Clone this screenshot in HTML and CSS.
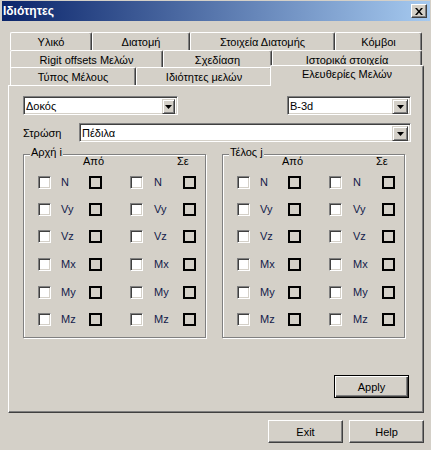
FILE: index.html
```html
<!DOCTYPE html>
<html>
<head>
<meta charset="utf-8">
<link rel="stylesheet" href="styles.css">
</head>
<body>
<div class="window">
  <div class="titlebar">
    <span class="title">Ιδιότητες</span>
    <span class="close"><svg width="8" height="7" viewBox="0 0 8 7"><path d="M0 0h2l2 2.4L6 0h2L5 3.5 8 7H6L4 4.6 2 7H0l3-3.5z" fill="#000"/></svg></span>
  </div>
  <div class="main">
    <div class="tabs">
      <div class="tabrow r1">
        <div class="tab t-yliko">Υλικό</div>
        <div class="tab t-diatomi">Διατομή</div>
        <div class="tab t-stoixeia">Στοιχεία Διατομής</div>
        <div class="tab t-komvoi">Κόμβοι</div>
      </div>
      <div class="tabrow r2">
        <div class="tab t-rigit">Rigit offsets Μελών</div>
        <div class="tab t-sxed">Σχεδίαση</div>
        <div class="tab t-istor">Ιστορικά στοιχεία</div>
      </div>
      <div class="tabrow r3">
        <div class="tab t-typos">Τύπος Μέλους</div>
        <div class="tab t-idiot">Ιδιότητες μελών</div>
        <div class="tab tab-active">Ελευθερίες Μελών</div>
      </div>
    </div>
    <div class="panel">
      <div class="combo-row">
        <div class="combo c-dokos"><span class="combo-text">Δοκός</span><span class="combo-btn narrow"><svg width="7" height="4" viewBox="0 0 7 4"><path d="M0 0h7L3.5 4z" fill="#000"/></svg></span></div>
        <div class="combo c-b3d"><span class="combo-text">B-3d</span><span class="combo-btn"><svg width="7" height="4" viewBox="0 0 7 4"><path d="M0 0h7L3.5 4z" fill="#000"/></svg></span></div>
      </div>
      <div class="strosi-row">
        <span class="strosi-label">Στρώση</span>
        <div class="combo c-pedila"><span class="combo-text">Πέδιλα</span><span class="combo-btn"><svg width="7" height="4" viewBox="0 0 7 4"><path d="M0 0h7L3.5 4z" fill="#000"/></svg></span></div>
      </div>
      <div class="groups">
        <div class="group">
          <span class="group-label">Αρχή i</span>
          <div class="group-head"><span class="h-apo">Από</span><span>Σε</span></div>
          <div class="rows">
            <div class="row"><span class="pair p1"><span class="cb"></span><span class="lbl">N</span><span class="bx"></span></span><span class="pair p2"><span class="cb"></span><span class="lbl">N</span><span class="bx"></span></span></div>
            <div class="row"><span class="pair p1"><span class="cb"></span><span class="lbl">Vy</span><span class="bx"></span></span><span class="pair p2"><span class="cb"></span><span class="lbl">Vy</span><span class="bx"></span></span></div>
            <div class="row"><span class="pair p1"><span class="cb"></span><span class="lbl">Vz</span><span class="bx"></span></span><span class="pair p2"><span class="cb"></span><span class="lbl">Vz</span><span class="bx"></span></span></div>
            <div class="row"><span class="pair p1"><span class="cb"></span><span class="lbl">Mx</span><span class="bx"></span></span><span class="pair p2"><span class="cb"></span><span class="lbl">Mx</span><span class="bx"></span></span></div>
            <div class="row"><span class="pair p1"><span class="cb"></span><span class="lbl">My</span><span class="bx"></span></span><span class="pair p2"><span class="cb"></span><span class="lbl">My</span><span class="bx"></span></span></div>
            <div class="row"><span class="pair p1"><span class="cb"></span><span class="lbl">Mz</span><span class="bx"></span></span><span class="pair p2"><span class="cb"></span><span class="lbl">Mz</span><span class="bx"></span></span></div>
          </div>
        </div>
        <div class="group">
          <span class="group-label">Τέλος j</span>
          <div class="group-head"><span class="h-apo">Από</span><span>Σε</span></div>
          <div class="rows">
            <div class="row"><span class="pair p1"><span class="cb"></span><span class="lbl">N</span><span class="bx"></span></span><span class="pair p2"><span class="cb"></span><span class="lbl">N</span><span class="bx"></span></span></div>
            <div class="row"><span class="pair p1"><span class="cb"></span><span class="lbl">Vy</span><span class="bx"></span></span><span class="pair p2"><span class="cb"></span><span class="lbl">Vy</span><span class="bx"></span></span></div>
            <div class="row"><span class="pair p1"><span class="cb"></span><span class="lbl">Vz</span><span class="bx"></span></span><span class="pair p2"><span class="cb"></span><span class="lbl">Vz</span><span class="bx"></span></span></div>
            <div class="row"><span class="pair p1"><span class="cb"></span><span class="lbl">Mx</span><span class="bx"></span></span><span class="pair p2"><span class="cb"></span><span class="lbl">Mx</span><span class="bx"></span></span></div>
            <div class="row"><span class="pair p1"><span class="cb"></span><span class="lbl">My</span><span class="bx"></span></span><span class="pair p2"><span class="cb"></span><span class="lbl">My</span><span class="bx"></span></span></div>
            <div class="row"><span class="pair p1"><span class="cb"></span><span class="lbl">Mz</span><span class="bx"></span></span><span class="pair p2"><span class="cb"></span><span class="lbl">Mz</span><span class="bx"></span></span></div>
          </div>
        </div>
      </div>
      <div class="apply-row"><button class="btn btn-default">Apply</button></div>
    </div>
    <div class="footer">
      <button class="btn">Exit</button>
      <button class="btn">Help</button>
    </div>
  </div>
</div>
</body>
</html>
```

FILE: styles.css
```css
html, body {
  margin: 0;
  padding: 0;
  background: #d4d0c8;
}
body {
  font-family: "Liberation Sans", Arial, sans-serif;
  font-size: 11px;
  color: #000;
}
.window {
  width: 431px;
  height: 450px;
  box-sizing: border-box;
  padding: 1px 1px 0 2px;
  background: #d4d0c8;
  overflow: hidden;
}
.titlebar {
  height: 20px;
  display: flex;
  align-items: center;
  justify-content: space-between;
  padding: 0 3px 0 1px;
  background: linear-gradient(to right, #0a246a 0%, #a6caf0 100%);
}
.title {
  color: #fff;
  font-weight: bold;
  font-size: 12px;
  line-height: 20px;
}
.close {
  width: 16px;
  height: 14px;
  box-sizing: border-box;
  background: #d4d0c8;
  border: 1px solid;
  border-color: #fff #404040 #404040 #fff;
  box-shadow: inset -1px -1px 0 #808080;
  display: flex;
  align-items: center;
  justify-content: center;
}
.main {
  padding-left: 6px;
  width: 416px;
}
.tabs {
  margin-top: 11px;
  padding-left: 2px;
}
.tabrow {
  display: flex;
  align-items: flex-start;
}
.r1 { height: 18px; }
.r2 { height: 17px; }
.r3 { height: 18px; }
.tab {
  box-sizing: border-box;
  height: 18px;
  border-top: 1px solid #fff;
  border-left: 1px solid #fff;
  border-right: 1px solid #404040;
  box-shadow: inset -1px 0 0 #808080;
  border-radius: 2px 2px 0 0;
  text-align: center;
  line-height: 17px;
  padding-top: 1px;
  white-space: nowrap;
  background: #d4d0c8;
}
.t-yliko { width: 82px; }
.t-diatomi { width: 98px; }
.t-stoixeia { width: 145px; }
.t-komvoi { width: 87px; }
.t-rigit { width: 153px; }
.t-sxed { width: 109px; }
.t-istor { width: 150px; }
.t-typos { width: 126px; }
.t-idiot { width: 136px; }
.tab-active {
  width: 154px;
  height: 21px;
  margin-left: -2px;
  margin-top: -2px;
  padding-top: 0;
  position: relative;
  z-index: 2;
}
.panel {
  box-sizing: border-box;
  width: 416px;
  height: 328px;
  border-top: 1px solid #fff;
  border-left: 1px solid #fff;
  border-right: 1px solid #404040;
  border-bottom: 1px solid #404040;
  box-shadow: inset -1px -1px 0 #808080;
  padding: 10px 12px 0 14px;
  position: relative;
  z-index: 1;
}
.combo-row {
  display: flex;
  justify-content: space-between;
}
.combo {
  box-sizing: border-box;
  height: 19px;
  display: flex;
  padding: 2px;
  background: #fff;
  border: 1px solid;
  border-color: #808080 #fff #fff #808080;
  box-shadow: inset 1px 1px 0 #404040, inset -1px -1px 0 #d4d0c8;
}
.c-dokos { width: 155px; }
.c-b3d { width: 124px; }
.c-pedila { width: 332px; }
.combo-text {
  flex: 1;
  line-height: 15px;
  padding-left: 0;
}
.combo-btn {
  box-sizing: border-box;
  width: 16px;
  height: 15px;
  background: #d4d0c8;
  border: 1px solid;
  border-color: #d4d0c8 #404040 #404040 #d4d0c8;
  box-shadow: inset 1px 1px 0 #fff, inset -1px -1px 0 #808080;
  display: flex;
  align-items: center;
  justify-content: center;
}
.combo-btn.narrow { width: 13px; }
.strosi-row {
  display: flex;
  align-items: center;
  justify-content: space-between;
  margin-top: 8px;
}
.groups {
  display: flex;
  gap: 16px;
  margin-top: 12px;
}
.group {
  position: relative;
  box-sizing: border-box;
  width: 183px;
  height: 184px;
  border: 1px solid #808080;
  box-shadow: inset 1px 1px 0 #fff, 1px 1px 0 #fff;
}
.group-label {
  position: absolute;
  top: -9px;
  left: 6px;
  padding: 0 1px;
  line-height: 13px;
  background: #d4d0c8;
}
.group-head {
  display: flex;
  padding-left: 59px;
  line-height: 13px;
}
.h-apo { width: 94px; }
.rows {
  margin-top: 8px;
  padding-left: 14px;
}
.row {
  display: flex;
  height: 13px;
  align-items: center;
}
.row + .row { margin-top: 14px; }
.row:nth-child(4), .row:nth-child(5) { margin-top: 15px; }
.pair {
  display: flex;
  align-items: center;
}
.p1 { margin-right: 28px; }
.cb {
  box-sizing: border-box;
  width: 13px;
  height: 13px;
  background: #fff;
  border: 1px solid;
  border-color: #808080 #fff #fff #808080;
  box-shadow: inset 1px 1px 0 #404040, inset -1px -1px 0 #d4d0c8;
  margin-right: 10px;
}
.p2 .cb { margin-right: 11px; }
.lbl {
  width: 28px;
  color: #121a4a;
  line-height: 13px;
}
.p2 .lbl { width: 29px; }
.bx {
  box-sizing: border-box;
  width: 13px;
  height: 13px;
  border: 2px solid #000;
}
.apply-row {
  display: flex;
  justify-content: flex-end;
  margin-top: 37px;
  padding-right: 2px;
}
.btn {
  box-sizing: border-box;
  width: 75px;
  height: 23px;
  padding: 0;
  margin: 0;
  font-family: "Liberation Sans", Arial, sans-serif;
  font-size: 11px;
  color: #000;
  background: #d4d0c8;
  border: 1px solid;
  border-color: #fff #404040 #404040 #fff;
  box-shadow: inset -1px -1px 0 #808080;
  border-radius: 0;
}
.btn-default {
  border: 1px solid #000;
  box-shadow: inset 1px 1px 0 #fff, inset -1px -1px 0 #404040, inset -2px -2px 0 #808080;
}
.footer {
  display: flex;
  justify-content: flex-end;
  gap: 6px;
  margin-top: 7px;
}
```
